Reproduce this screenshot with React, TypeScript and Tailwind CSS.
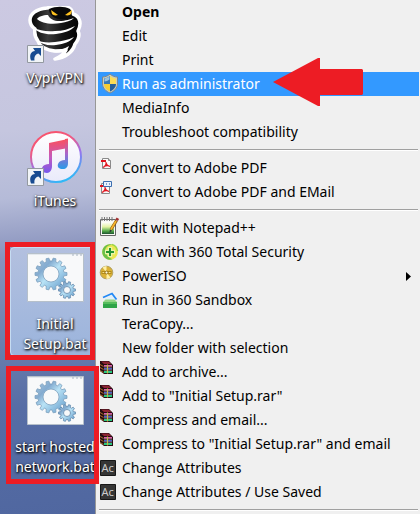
import React from "react";

type IconName = "shield" | "pdf" | "pdfMail" | "notepad" | "scan" | "disc" | "sandbox" | "rar" | "ac";

type Entry =
  | { kind: "separator" }
  | { kind: "item"; label: string; icon?: IconName; bold?: boolean; active?: boolean; submenu?: boolean };

const item = (label: string, icon?: IconName, extra: { bold?: boolean; active?: boolean; submenu?: boolean } = {}): Entry => ({
  kind: "item",
  label,
  icon,
  ...extra,
});

const entries: Entry[] = [
  item("Open", undefined, { bold: true }),
  item("Edit"),
  item("Print"),
  item("Run as administrator", "shield", { active: true }),
  item("MediaInfo"),
  item("Troubleshoot compatibility"),
  { kind: "separator" },
  item("Convert to Adobe PDF", "pdf"),
  item("Convert to Adobe PDF and EMail", "pdfMail"),
  { kind: "separator" },
  item("Edit with Notepad++", "notepad"),
  item("Scan with 360 Total Security", "scan"),
  item("PowerISO", "disc", { submenu: true }),
  item("Run in 360 Sandbox", "sandbox"),
  item("TeraCopy..."),
  item("New folder with selection"),
  item("Add to archive...", "rar"),
  item('Add to "Initial Setup.rar"', "rar"),
  item("Compress and email...", "rar"),
  item('Compress to "Initial Setup.rar" and email', "rar"),
  item("Change Attributes", "ac"),
  item("Change Attributes / Use Saved", "ac"),
  { kind: "separator" },
];

function gearPath(cx: number, cy: number, outer: number, inner: number, hole: number, teeth: number) {
  const step = (Math.PI * 2) / teeth;
  const point = (r: number, a: number) => `${(cx + r * Math.cos(a)).toFixed(2)} ${(cy + r * Math.sin(a)).toFixed(2)}`;
  let d = "";
  for (let i = 0; i < teeth; i++) {
    const a = i * step;
    d += `${i === 0 ? "M" : "L"}${point(inner, a - step * 0.32)}L${point(outer, a - step * 0.2)}L${point(outer, a + step * 0.2)}L${point(inner, a + step * 0.32)}`;
  }
  return `${d}ZM${cx - hole} ${cy}a${hole} ${hole} 0 1 0 ${hole * 2} 0a${hole} ${hole} 0 1 0 ${-hole * 2} 0Z`;
}

function PdfPage() {
  return (
    <>
      <path d="M4.500 2.500h6l2 2v8h-8z" fill="#fafafa" stroke="#8a8a8a" />
      <path d="M10.500 2.500v2h2" fill="#ddd" stroke="#8a8a8a" />
      <path d="M3 4h5v2H3z" fill="#e0141e" />
      <path d="M5 11.500c2-1 3.500-3 3-5.500M8 7c.5 2 2 3 4 3.500M6 10.500c2-1.200 3.500-1.300 5.500-.5" fill="none" stroke="#e0141e" strokeWidth="1.200" />
    </>
  );
}

function MenuIcon({ name }: { name: IconName }) {
  return (
    <svg viewBox="0 0 24 24" className="h-6 w-6 shrink-0" aria-hidden="true">
      {name === "shield" && (
        <>
          <path d="M12 2c2 2 5 3 7.500 3v7c0 4-3.500 7.500-7.500 9-4-1.500-7.500-5-7.500-9V5C7 5 10 4 12 2z" fill="#c9cdbf" stroke="#7b8790" />
          <path d="M12 4C10 5.500 8 6.300 6 6.500V12h6z" fill="#3778b8" />
          <path d="M12 4c2 1.500 4 2.300 6 2.500V12h-6z" fill="#fbdc55" />
          <path d="M6 12c0 3.500 3 6.300 6 7.500V12z" fill="#f8cd32" />
          <path d="M18 12c0 3.500-3 6.300-6 7.500V12z" fill="#245f9c" />
          <path d="M6.500 6.500c2-.2 3.500-1 5-2v3c-1.500 1-3.500 2-5 2z" fill="#9cc4df" />
        </>
      )}
      {name === "pdf" && <PdfPage />}
      {name === "pdfMail" && (
        <>
          <g transform="translate(-1 1)"><PdfPage /></g>
          <path d="M5.500 1.500h8v5h-8z" fill="#e8f2ff" stroke="#3c6fb0" />
          <path d="M8 4h1M11 4h1" fill="none" stroke="#24549a" />
        </>
      )}
      {name === "notepad" && (
        <>
          <defs>
            <linearGradient id="note" x1="0" y1="0" x2="0" y2="1">
              <stop offset="0" stopColor="#fff" />
              <stop offset=".4" stopColor="#e5f3a5" />
              <stop offset=".75" stopColor="#52a848" />
              <stop offset="1" stopColor="#1d5430" />
            </linearGradient>
          </defs>
          <path d="M2.500 3.500h15v16h-15z" fill="#f8f8f4" stroke="#666" />
          <path d="M4 6h12v12H4z" fill="url(#note)" />
          <path d="M4 1v4M6.500 1v4M9 1v4M11.500 1v4M14 1v4" stroke="#777" />
          <path d="M18.500 4.500l-5.500 9" stroke="#87520f" strokeWidth="3" />
          <path d="M18 5l-5 8.500" stroke="#f7b52c" strokeWidth="1.800" />
          <path d="M18 2.500l2.500 1.500" stroke="#a32e2e" strokeWidth="2.400" />
          <path d="M11.500 16.500l.4-3 2.200 1.300z" fill="#333" />
        </>
      )}
      {name === "scan" && (
        <>
          <circle cx="12" cy="12" r="7.800" fill="#ebe650" />
          <path d="M4.200 12A7.800 7.800 0 0 1 15 4.800C9 5 6.500 8.500 7.500 12c.5 3 3 5.500 7 7.300A7.800 7.800 0 0 1 4.200 12z" fill="#6cc04a" />
          <path d="M14 4.500c3 .8 5 3 5.500 6.500" fill="none" stroke="#9ed646" strokeWidth="1.500" />
          <path d="M12 7v10M7 12h10" stroke="#e9f5a9" strokeWidth="4.400" />
          <path d="M12 8v8M8 12h8" stroke="#259532" strokeWidth="2" />
        </>
      )}
      {name === "disc" && (
        <>
          <circle cx="8.500" cy="8.500" r="6.300" fill="#dcb336" stroke="#b1a060" />
          <path d="M8.500 8.500L4.500 3.500A6 6 0 0 1 8.500 2zM8.500 8.500l4 5a6 6 0 0 1-4 1.500z" fill="#fff0a6" />
          <path d="M3.500 8.500h10" stroke="#b38b1a" strokeWidth="3" />
          <path d="M4.500 8.500h2M10.500 8.500h2" stroke="#f7e287" />
          <circle cx="8.500" cy="8.500" r="1.500" fill="#fffbe2" stroke="#9c7615" />
        </>
      )}
      {name === "sandbox" && (
        <>
          <path d="M6 11l8-4 4 5H6z" fill="#e2f0f9" />
          <path d="M5 9.500L14 5.500l4.500 6" fill="none" stroke="#2289f6" strokeWidth="1.800" />
          <path d="M5 14l2.500-2.500h9L19 14z" fill="#94d487" />
          <path d="M5 14h14v6H5z" fill="#2fa347" />
          <path d="M5 14h14v2H5z" fill="#57bd5d" />
        </>
      )}
      {name === "rar" && (
        <>
          <path d="M2 1h9l4 4v9H6l-4-3z" fill="#250b10" />
          <path d="M3 1.500h7.500l3 2.500H6z" fill="#8e2332" />
          <path d="M6 5h8v1.500H6z" fill="#df57a9" />
          <path d="M6 8h8v1.500H6z" fill="#4a60c8" />
          <path d="M6 11h8v2H6z" fill="#28c880" />
          <path d="M2 4l3.500 2v1L2 5zM2 7l3.500 2v1L2 8zM2 10l3.500 2v1L2 11z" fill="#b06f2b" />
          <path d="M6 7h8M6 10h8" stroke="#ddd" strokeWidth=".5" />
          <path d="M9.500 4.500v9" stroke="#c4b347" strokeWidth="1.200" />
        </>
      )}
      {name === "ac" && (
        <>
          <path d="M2.500 4.500h15v15h-15z" fill="#353535" stroke="#171717" />
          <text x="3.500" y="16" fontSize="11" fill="#ccc" fontFamily="Noto Sans, sans-serif">Ac</text>
        </>
      )}
    </svg>
  );
}

function ShortcutBadge() {
  return (
    <>
      <path d="M.5 39.500h16v17H.5z" fill="#f1f4f7" stroke="#9399a0" />
      <path d="M4 54.500c-2-6 0-9 4-9.500l-2-3h8v8l-2.500-2.500C8.500 48 7 50.500 7.500 54.500z" fill="#174b91" />
    </>
  );
}

function VyprIcon() {
  return (
    <svg viewBox="0 0 57 58" className="h-[58px] w-[57px] shrink-0" aria-hidden="true">
      <defs>
        <linearGradient id="coil" x1="0" y1="0" x2="1" y2="0">
          <stop offset="0" stopColor="#000" />
          <stop offset=".35" stopColor="#3a3a3a" />
          <stop offset=".65" stopColor="#151515" />
          <stop offset="1" stopColor="#000" />
        </linearGradient>
      </defs>
      <path
        d="M20 2C9 3 3 8 3 14c0 4 2 7 5 9-1 5 0 8 3 12 2 6 8 9 17 10 5 0 8 0 11-1-2 4-6 7-11 9 10-1 18-7 20-15 4-5 5-9 3-13 2-4 3-8 1-12-1-3-3-4-6-5-1-5-4-7-8-7-6 0-12-1-18 1z"
        fill="url(#coil)"
        stroke="#fff"
        strokeWidth="3.500"
        strokeLinejoin="round"
      />
      <path d="M21 9c-5 0-10 2-11 4 4 4 14 6 24 4 5-1 10-2 13-5-4 1-8 3-15 3-5 0-9-2-11-6z" fill="#fff" />
      <path d="M7 22c4 5 12 7 22 6 8-1 15-3 19-8-6 3-12 5-20 5-9 1-16-1-21-3z" fill="#fff" />
      <path d="M9 34c5 4 12 6 20 5 8-1 14-3 18-8-6 3-12 4-19 5-8 1-14 0-19-2z" fill="#fff" />
      <path d="M18 44c7 2 16 1 24-4-1 3-2 4-4 5-6 2-13 2-20-1z" fill="#fff" />
      <path d="M22 3c7-3 15-3 21 0 3 4 2 8-3 10h-8c-6-1-10-5-10-10z" fill="#090909" />
      <path d="M24 4l7 5c-3 1-5 0-6-1zM45 4l-7 5c3 1 5 0 6-1z" fill="#ffc21f" />
      <ShortcutBadge />
    </svg>
  );
}

function ItunesIcon() {
  return (
    <svg viewBox="0 0 57 58" className="h-[58px] w-[57px] shrink-0" aria-hidden="true">
      <defs>
        <linearGradient id="ring" x1=".2" y1="0" x2=".6" y2="1">
          <stop offset="0" stopColor="#fa5268" />
          <stop offset=".3" stopColor="#f05a82" />
          <stop offset=".6" stopColor="#9a72ed" />
          <stop offset="1" stopColor="#30b9f7" />
        </linearGradient>
        <linearGradient id="music" x1="0" y1="0" x2="0" y2="1">
          <stop offset="0" stopColor="#fb4f5c" />
          <stop offset=".55" stopColor="#c25bc0" />
          <stop offset="1" stopColor="#7659ed" />
        </linearGradient>
        <linearGradient id="note-right" x1="0" y1="0" x2="0" y2="1">
          <stop offset="0" stopColor="#fb4f5c" />
          <stop offset=".5" stopColor="#a866cc" />
          <stop offset="1" stopColor="#279be8" />
        </linearGradient>
        <linearGradient id="face" x1="0" y1="0" x2="0" y2="1">
          <stop offset="0" stopColor="#fff" />
          <stop offset="1" stopColor="#e9eafa" />
        </linearGradient>
      </defs>
      <circle cx="29" cy="28" r="25" fill="url(#face)" stroke="url(#ring)" strokeWidth="2" />
      <path d="M22 14l19-4v9l-16 3v15c0 4-2 7-5 7-4 0-6-3-5-5 1-3 4-4 7-4z" fill="url(#music)" />
      <path d="M38 10l3-.500V34c0 4-2 6-5 6-4 0-6-2-5-5 1-3 4-4 7-4z" fill="url(#note-right)" />
      <ShortcutBadge />
    </svg>
  );
}

function BatchIcon() {
  return (
    <svg viewBox="0 0 57 58" className="h-[58px] w-[57px] shrink-0" aria-hidden="true">
      <defs>
        <linearGradient id="gear" x1="0" y1="0" x2="1" y2="1">
          <stop offset="0" stopColor="#a9c6de" />
          <stop offset=".3" stopColor="#83abd0" />
          <stop offset=".5" stopColor="#b9e3f6" />
          <stop offset="1" stopColor="#5c94c6" />
        </linearGradient>
      </defs>
      <path d="M.5 1.500h56v48H.5z" fill="#f8f9fa" stroke="#b6c0ca" />
      <path d="M1 2h55v1H1z" fill="#e3e8ed" />
      <path d="M45 3h2M49 3h2M53 3h2" stroke="#a6b3c0" />
      <path d={gearPath(24, 22, 16, 13, 8, 14)} fill="url(#gear)" fillRule="evenodd" stroke="#7b9fbe" strokeWidth=".8" />
      <path d={gearPath(40, 38, 8.5, 6.5, 3.5, 10)} fill="url(#gear)" fillRule="evenodd" stroke="#5f87ab" strokeWidth=".8" />
    </svg>
  );
}

function DesktopItem({ icon, lines }: { icon: React.ReactNode; lines: string[] }) {
  return (
    <button
      type="button"
      className="flex h-[123px] w-20 shrink-0 flex-col items-center gap-1 whitespace-nowrap text-sm leading-5 text-white [text-shadow:1px_1px_2px_#000,0_1px_3px_#111]"
    >
      {icon}
      <span className="flex flex-col items-center">
        {lines.map((line) => (
          <span key={line}>{line}</span>
        ))}
      </span>
    </button>
  );
}

export default function App() {
  return (
    <main className="relative flex min-h-screen items-stretch overflow-hidden bg-[#f0f0f0] font-['Noto_Sans','Open_Sans',sans-serif] text-black">
      <section
        aria-label="Desktop"
        className="relative w-[95px] shrink-0 bg-[linear-gradient(175deg,#ccc9e2_0%,#c5c6df_25%,#b5bbd8_38%,#8993bd_49%,#6c7fae_65%,#566da5_78%,#5067a0_100%)]"
      >
        <div className="absolute top-[247px] left-[10px] h-[109px] w-[84px] rounded-sm border border-[#c6dcf2] bg-linear-to-b from-[#b3c0df] to-[#9bb4dc]" />
        <div className="relative flex flex-col pt-1.5 pl-[15px]">
          <DesktopItem icon={<VyprIcon />} lines={["VyprVPN"]} />
          <DesktopItem icon={<ItunesIcon />} lines={["iTunes"]} />
          <DesktopItem icon={<BatchIcon />} lines={["Initial", "Setup.bat"]} />
          <DesktopItem icon={<BatchIcon />} lines={["start hosted", "network.bat"]} />
        </div>
      </section>

      <div role="menu" className="min-w-0 flex-1 border-l border-[#979797] pr-px pl-0.5">
        {entries.map((entry, index) =>
          entry.kind === "separator" ? (
            <div key={index} role="separator" className="flex h-3 items-center pr-px pl-px">
              <div className="h-0.5 w-full border-t border-[#a0a0a0] bg-white" />
            </div>
          ) : (
            <button
              key={index}
              type="button"
              role="menuitem"
              className={`flex h-6 w-full items-center whitespace-nowrap text-left text-sm leading-6 ${
                entry.active ? "bg-[#3399ff] text-white" : ""
              } ${entry.bold ? "font-bold" : ""}`}
            >
              {entry.icon ? <MenuIcon name={entry.icon} /> : <span className="w-6 shrink-0" />}
              <span className="flex-1">{entry.label}</span>
              {entry.submenu && (
                <svg viewBox="0 0 5 9" className="mr-2 h-[9px] w-[5px]" aria-hidden="true">
                  <path d="M0 0l5 4.500L0 9z" fill="#000" />
                </svg>
              )}
            </button>
          ),
        )}
      </div>

      <div className="pointer-events-none absolute top-[242px] left-[5px] h-[118px] w-[90px] border-5 border-[#ed1c24]" />
      <div className="pointer-events-none absolute top-[366px] left-[6px] h-[118px] w-[93px] border-5 border-[#ed1c24]" />
      <svg viewBox="0 0 90 48" className="pointer-events-none absolute top-[58px] left-[273px] h-12 w-[90px]" aria-hidden="true">
        <path d="M0 24L45 0h2v11h42l1 1v24l-1 1H47v11h-2z" fill="#ed1c24" />
      </svg>
    </main>
  );
}
